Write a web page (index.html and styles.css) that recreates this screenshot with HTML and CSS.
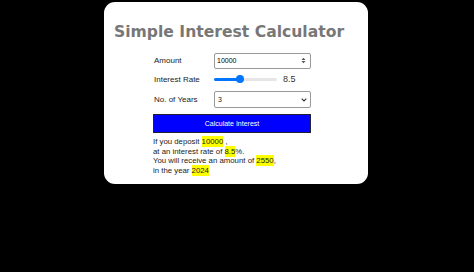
FILE: index.html
```html
<!DOCTYPE html>
<html lang="en">
<head>
    <meta charset="UTF-8">
    <meta name="viewport" content="width=device-width, initial-scale=1.0">
    <title>Simple Interest Calculator</title>
    <link rel="stylesheet" href="styles.css">
</head>
<body>
    <div class="card">
        <h1>Simple Interest Calculator</h1>
        <div class="form">
            <div class="row">
                <label for="amount">Amount</label>
                <div class="field">
                    <input type="number" id="amount" value="10000">
                    <svg class="spin" width="5" height="7" viewBox="0 0 5 7">
                        <path d="M0.5 3 L2.5 0.8 L4.5 3 Z M0.5 4 L2.5 6.2 L4.5 4 Z" fill="#555"/>
                    </svg>
                </div>
            </div>
            <div class="row">
                <label for="rate">Interest Rate</label>
                <div class="range-wrap">
                    <input type="range" id="rate" min="1" max="20" step="0.25" value="8.5">
                    <span class="rate-value">8.5</span>
                </div>
            </div>
            <div class="row">
                <label for="years">No. of Years</label>
                <div class="field">
                    <select id="years">
                        <option>1</option>
                        <option>2</option>
                        <option selected>3</option>
                        <option>4</option>
                        <option>5</option>
                    </select>
                    <svg class="chev" width="6" height="4" viewBox="0 0 6 4">
                        <path d="M0.7 0.7 L3 3 L5.3 0.7" fill="none" stroke="#333" stroke-width="1.1"/>
                    </svg>
                </div>
            </div>
            <button class="calc">Calculate Interest</button>
            <div class="result">
                If you deposit <mark>10000</mark> ,<br>
                at an interest rate of <mark>8.5</mark>%.<br>
                You will receive an amount of <mark>2550</mark>,<br>
                in the year <mark>2024</mark>
            </div>
        </div>
    </div>
</body>
</html>
```

FILE: styles.css
```css
* {
    margin: 0;
    padding: 0;
    box-sizing: border-box;
}
body {
    background: #000;
    font-family: "Liberation Sans", Arial, sans-serif;
}
.card {
    width: 264px;
    height: 182px;
    margin: 2px 0 0 104px;
    padding: 19px 0 0 10px;
    background: #fff;
    border-radius: 11px;
}
h1 {
    font-family: "DejaVu Sans", Verdana, sans-serif;
    font-size: 15.6px;
    font-weight: bold;
    color: #777;
    line-height: 22px;
}
.form {
    width: 158px;
    margin: 8px 0 0 39px;
    font-size: 8px;
    color: #222;
}
.row {
    display: grid;
    grid-template-columns: 61px 97px;
    align-items: center;
}
.row:nth-child(1) {
    height: 19px;
}
.row:nth-child(2) {
    height: 18px;
}
.row:nth-child(3) {
    height: 23px;
    margin-bottom: 3px;
}
.row label {
    padding-left: 1px;
}
.field {
    position: relative;
}
input[type="number"] {
    display: block;
    width: 97px;
    height: 16px;
    font-size: 7px;
    padding: 0 2px;
    border: 1px solid #999;
    border-radius: 2px;
    -moz-appearance: textfield;
}
input[type="number"]::-webkit-inner-spin-button {
    -webkit-appearance: none;
}
.spin {
    position: absolute;
    right: 5px;
    top: 4px;
}
.range-wrap {
    display: flex;
    align-items: center;
    gap: 6px;
    height: 14px;
}
input[type="range"] {
    -webkit-appearance: none;
    appearance: none;
    width: 63px;
    height: 3px;
    border-radius: 2px;
    background: linear-gradient(to right, #0075ff 0 42%, #e6e6e6 42% 100%);
}
input[type="range"]::-webkit-slider-thumb {
    -webkit-appearance: none;
    width: 8px;
    height: 8px;
    border-radius: 50%;
    background: #0075ff;
    border: none;
}
.rate-value {
    font-size: 9px;
    color: #333;
}
select {
    display: block;
    width: 97px;
    height: 17px;
    font-size: 7px;
    padding: 0 3px;
    border: 1px solid #999;
    border-radius: 2px;
    background: #fff;
    -webkit-appearance: none;
    appearance: none;
    color: #222;
}
.chev {
    position: absolute;
    right: 4px;
    top: 7px;
}
.calc {
    display: block;
    width: 158px;
    height: 19px;
    background: #0000ff;
    color: #fff;
    border: 1px solid #223;
    font-size: 7px;
    font-family: "Liberation Sans", Arial, sans-serif;
}
.result {
    margin-top: 4px;
    font-size: 7.8px;
    line-height: 9.5px;
    color: #222;
}
mark {
    background: #ffff00;
    color: #222;
    padding: 1px 0;
}
```
